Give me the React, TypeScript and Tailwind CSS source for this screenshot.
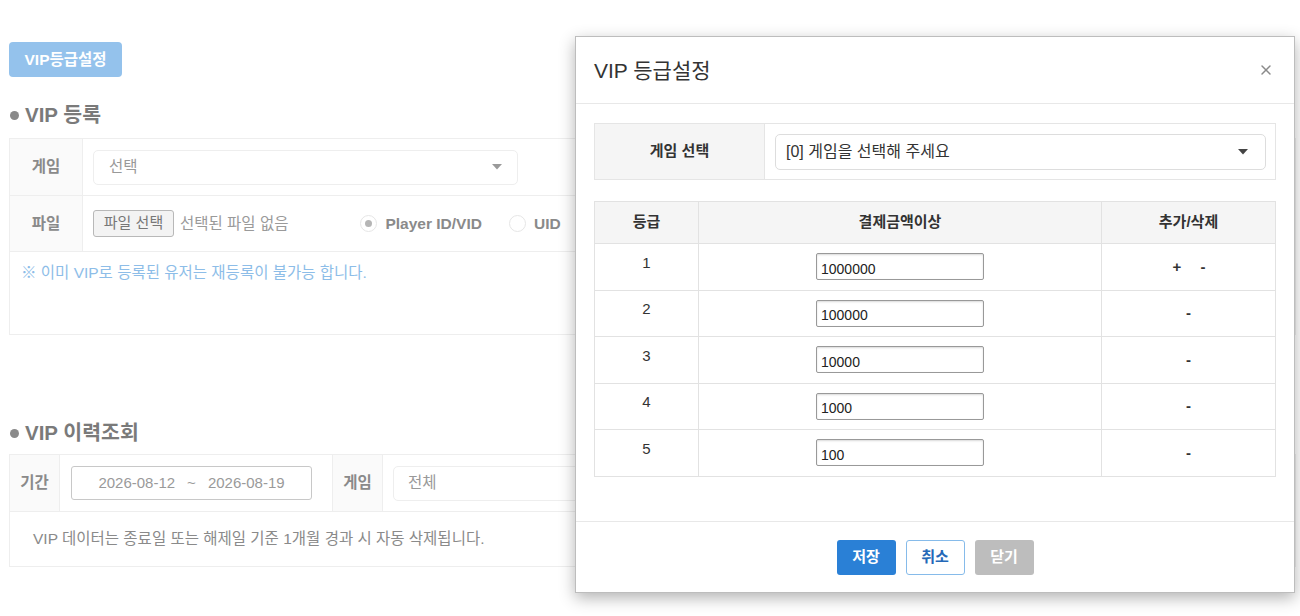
import { X } from "lucide-react"

const GRADES = [
  { grade: 1, amount: "1000000", add: true },
  { grade: 2, amount: "100000", add: false },
  { grade: 3, amount: "10000", add: false },
  { grade: 4, amount: "1000", add: false },
  { grade: 5, amount: "100", add: false },
]

const FONT = { fontFamily: '"Liberation Sans", Arial, "Noto Sans CJK KR", sans-serif' }

function Caret({ className }: { className?: string }) {
  return (
    <svg width="10" height="6" viewBox="0 0 10 6" className={className}>
      <path d="M0,0 L10,0 L5,5.5Z" fill="currentColor" />
    </svg>
  )
}

function Radio({ checked }: { checked?: boolean }) {
  return (
    <span className="inline-flex h-[17px] w-[17px] items-center justify-center rounded-full border border-[#e6e6e6] bg-white">
      {checked && <span className="h-[7px] w-[7px] rounded-full bg-[#b5b5b5]" />}
    </span>
  )
}

export default function App() {
  return (
    <div className="relative h-[616px] w-[1300px] overflow-hidden bg-white" style={FONT}>
      {/* page behind the modal */}
      <div className="pl-[9px] pr-[4px] pt-[42px]">
        <button className="h-[35px] w-[113px] rounded-[4px] bg-[#94c2ec] text-[15.5px] font-bold text-white">
          VIP등급설정
        </button>

        <h3 className="mt-[26px] mb-[11px] flex items-center gap-[6px] text-[20.5px] font-bold leading-[24px] text-[#7a7a7a]">
          <span className="ml-[1px] h-[9px] w-[9px] rounded-full bg-[#8a8a8a]" />
          VIP 등록
        </h3>

        <div className="border border-[#eeeeee] text-[15.5px]">
          <div className="flex h-[57px] border-b border-[#eeeeee]">
            <div className="flex w-[73px] items-center justify-center border-r border-[#eeeeee] bg-[#fafafa] font-bold text-[#8a8a8a]">
              게임
            </div>
            <div className="flex flex-1 items-center pl-[10px]">
              <div className="flex h-[35px] w-[425px] items-center justify-between rounded-[5px] border border-[#eeeeee] pl-[15px] pr-[15px] text-[#999]">
                <span>선택</span>
                <Caret className="text-[#9a9a9a]" />
              </div>
            </div>
          </div>
          <div className="flex h-[56px] border-b border-[#eeeeee]">
            <div className="flex w-[73px] items-center justify-center border-r border-[#eeeeee] bg-[#fafafa] font-bold text-[#8a8a8a]">
              파일
            </div>
            <div className="flex flex-1 items-center pl-[10px]">
              <span className="flex h-[27px] w-[81px] items-center justify-center rounded-[3px] border border-[#b8b8b8] bg-[#f3f3f3] text-[15px] text-[#777]">
                파일 선택
              </span>
              <span className="ml-[6px] text-[#9a9a9a]">선택된 파일 없음</span>
              <span className="ml-[72px] flex items-center gap-[8px] font-bold text-[#8a8a8a]">
                <Radio checked />
                Player ID/VID
              </span>
              <span className="ml-[27px] flex items-center gap-[8px] font-bold text-[#8a8a8a]">
                <Radio />
                UID
              </span>
            </div>
          </div>
          <div className="h-[82px] px-[11px] pt-[9px] text-[#8dbde8]">
            ※ 이미 VIP로 등록된 유저는 재등록이 불가능 합니다.
          </div>
        </div>

        <h3 className="mt-[86px] mb-[9px] flex items-center gap-[6px] text-[20.5px] font-bold leading-[24px] text-[#7a7a7a]">
          <span className="ml-[1px] h-[9px] w-[9px] rounded-full bg-[#8a8a8a]" />
          VIP 이력조회
        </h3>

        <div className="border border-[#eeeeee] text-[15.5px]">
          <div className="flex h-[57px] border-b border-[#eeeeee]">
            <div className="flex w-[50px] items-center justify-center border-r border-[#eeeeee] bg-[#fafafa] font-bold text-[#8a8a8a]">
              기간
            </div>
            <div className="flex w-[272px] items-center pl-[11px]">
              <div className="flex h-[34px] w-[241px] items-center justify-center gap-[12px] rounded-[3px] border border-[#c8c8c8] text-[15px] text-[#9a9a9a]">
                <span>2026-08-12</span>
                <span>~</span>
                <span>2026-08-19</span>
              </div>
            </div>
            <div className="flex w-[51px] items-center justify-center border-x border-[#eeeeee] bg-[#fafafa] font-bold text-[#8a8a8a]">
              게임
            </div>
            <div className="flex flex-1 items-center pl-[10px]">
              <div className="flex h-[35px] w-[425px] items-center rounded-[5px] border border-[#eeeeee] pl-[14px] text-[#999]">
                전체
              </div>
            </div>
          </div>
          <div className="flex h-[54px] items-center pl-[23px] text-[#8a8a8a]">
            VIP 데이터는 종료일 또는 해제일 기준 1개월 경과 시 자동 삭제됩니다.
          </div>
        </div>
      </div>

      {/* modal */}
      <div className="absolute left-[575px] top-[36px] flex h-[557px] w-[720px] flex-col border border-[#bdbdbd] bg-white shadow-[0_5px_15px_rgba(0,0,0,0.3)]">
        <div className="flex h-[67px] items-center justify-between border-b border-[#e8e8e8] pl-[18px] pr-[20px]">
          <h2 className="text-[21px] leading-none text-[#333]">VIP 등급설정</h2>
          <X className="h-[16px] w-[16px] text-[#8a8a8a]" strokeWidth={2.2} />
        </div>

        <div className="flex-1 px-[18px] pt-[19px]">
          <div className="flex h-[57px] border border-[#e5e5e5]">
            <div className="flex w-[170px] items-center justify-center border-r border-[#e5e5e5] bg-[#f5f5f5] text-[15px] font-bold text-[#333]">
              게임 선택
            </div>
            <div className="flex flex-1 items-center pl-[10px] pr-[9px]">
              <div className="flex h-[36px] w-full items-center justify-between rounded-[5px] border border-[#dddddd] pl-[10px] pr-[17px] text-[16px] text-[#333]">
                <span>[0] 게임을 선택해 주세요</span>
                <Caret className="text-[#444]" />
              </div>
            </div>
          </div>

          <table className="mt-[21px] w-full border-collapse border border-[#e2e2e2] text-[15px] text-[#333]">
            <thead>
              <tr className="h-[42px] bg-[#f5f5f5]">
                <th className="w-[104px] border border-[#e2e2e2] font-bold">등급</th>
                <th className="w-[403px] border border-[#e2e2e2] font-bold">결제금액이상</th>
                <th className="border border-[#e2e2e2] font-bold">추가/삭제</th>
              </tr>
            </thead>
            <tbody>
              {GRADES.map((g) => (
                <tr key={g.grade} className="h-[46.5px]">
                  <td className="border border-[#e2e2e2] pb-[8px] text-center text-[15px]">{g.grade}</td>
                  <td className="border border-[#e2e2e2] text-center">
                    <input
                      readOnly
                      value={g.amount}
                      className="h-[27px] w-[168px] rounded-[2px] border border-[#999] pl-[4px] pt-[4px] text-[14px] text-[#222] shadow-[inset_0_1px_2px_rgba(0,0,0,0.15)]"
                      style={FONT}
                    />
                  </td>
                  <td className="border border-[#e2e2e2] text-center font-bold">
                    {g.add ? (
                      <span className="inline-flex gap-[19px] pl-[1px]">
                        <span>+</span>
                        <span>-</span>
                      </span>
                    ) : (
                      <span>-</span>
                    )}
                  </td>
                </tr>
              ))}
            </tbody>
          </table>
        </div>

        <div className="flex h-[71px] items-start justify-center gap-[10px] border-t border-[#e8e8e8] pt-[18px] text-[15px] font-bold">
          <button className="h-[35px] w-[59px] rounded-[3px] bg-[#2a80d6] text-white">저장</button>
          <button className="h-[35px] w-[59px] rounded-[3px] border border-[#86bbea] bg-white text-[#2468b8]">취소</button>
          <button className="h-[35px] w-[59px] rounded-[3px] bg-[#bdbdbd] text-white">닫기</button>
        </div>
      </div>
    </div>
  )
}
